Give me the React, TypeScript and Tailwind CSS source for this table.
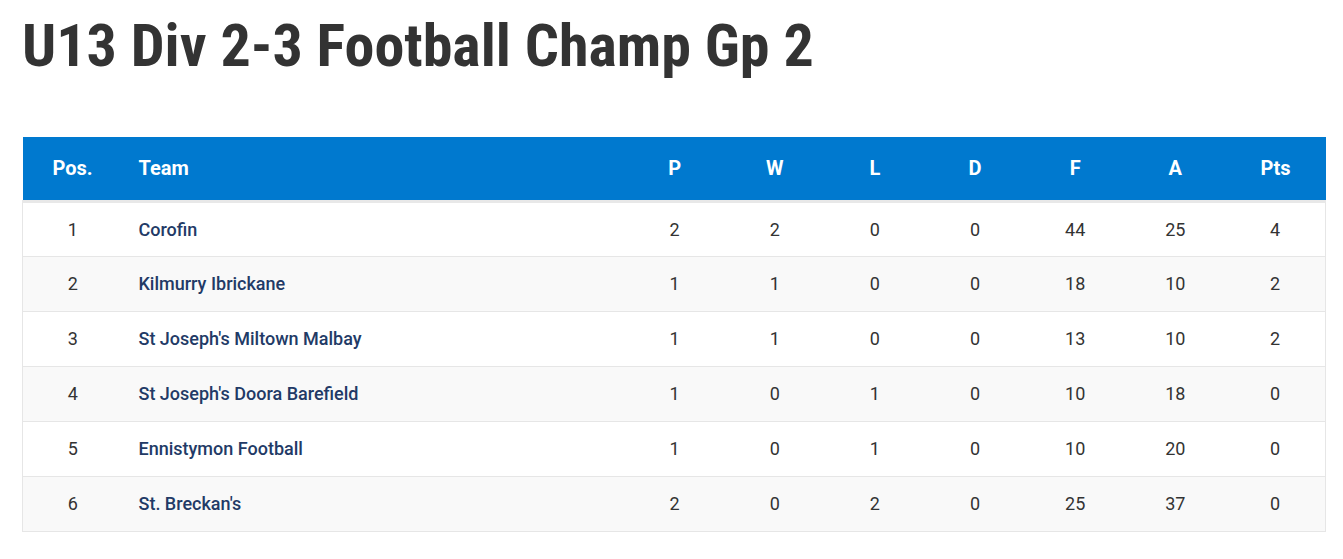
import React from "react";

type Row = {
  pos: number;
  team: string;
  p: number;
  w: number;
  l: number;
  d: number;
  f: number;
  a: number;
  pts: number;
};

const rows: Row[] = [
  { pos: 1, team: "Corofin", p: 2, w: 2, l: 0, d: 0, f: 44, a: 25, pts: 4 },
  { pos: 2, team: "Kilmurry Ibrickane", p: 1, w: 1, l: 0, d: 0, f: 18, a: 10, pts: 2 },
  { pos: 3, team: "St Joseph's Miltown Malbay", p: 1, w: 1, l: 0, d: 0, f: 13, a: 10, pts: 2 },
  { pos: 4, team: "St Joseph's Doora Barefield", p: 1, w: 0, l: 1, d: 0, f: 10, a: 18, pts: 0 },
  { pos: 5, team: "Ennistymon Football", p: 1, w: 0, l: 1, d: 0, f: 10, a: 20, pts: 0 },
  { pos: 6, team: "St. Breckan's", p: 2, w: 0, l: 2, d: 0, f: 25, a: 37, pts: 0 },
];

const statCols = ["P", "W", "L", "D", "F", "A", "Pts"];

const App: React.FC = () => {
  return (
    <div className="min-h-[559px] bg-white px-[22px] pt-[12px] font-['Roboto',sans-serif]">
      {/* Title */}
      <h1 className="font-['Roboto_Condensed','Roboto',sans-serif] text-[60px] font-bold leading-[68px] text-[#333333]">
        U13 Div 2-3 Football Champ Gp 2
      </h1>

      {/* League table */}
      <table className="mt-[57px] w-[1304px] table-fixed border-collapse">
        <colgroup>
          <col className="w-[100px]" />
          <col className="w-[502px]" />
          {statCols.map((c) => (
            <col key={c} />
          ))}
        </colgroup>
        <thead>
          <tr className="h-[64px] bg-[#0079cf] text-[20px] font-bold text-white">
            <th className="text-center">Pos.</th>
            <th className="pl-[16px] text-left">Team</th>
            {statCols.map((c) => (
              <th key={c} className="text-center">
                {c}
              </th>
            ))}
          </tr>
        </thead>
        <tbody className="border-t-[3px] border-[#e8e8e8]">
          {rows.map((r, i) => (
            <tr
              key={r.pos}
              className={`h-[55px] border-b border-l border-r border-[#e6e6e6] text-[18px] text-[#333333] ${
                i % 2 === 1 ? "bg-[#f9f9f9]" : "bg-white"
              }`}
            >
              <td className="text-center">{r.pos}</td>
              <td className="pl-[16px] font-medium text-[#223a66]">{r.team}</td>
              <td className="text-center">{r.p}</td>
              <td className="text-center">{r.w}</td>
              <td className="text-center">{r.l}</td>
              <td className="text-center">{r.d}</td>
              <td className="text-center">{r.f}</td>
              <td className="text-center">{r.a}</td>
              <td className="text-center">{r.pts}</td>
            </tr>
          ))}
        </tbody>
      </table>
    </div>
  );
};

export default App;
